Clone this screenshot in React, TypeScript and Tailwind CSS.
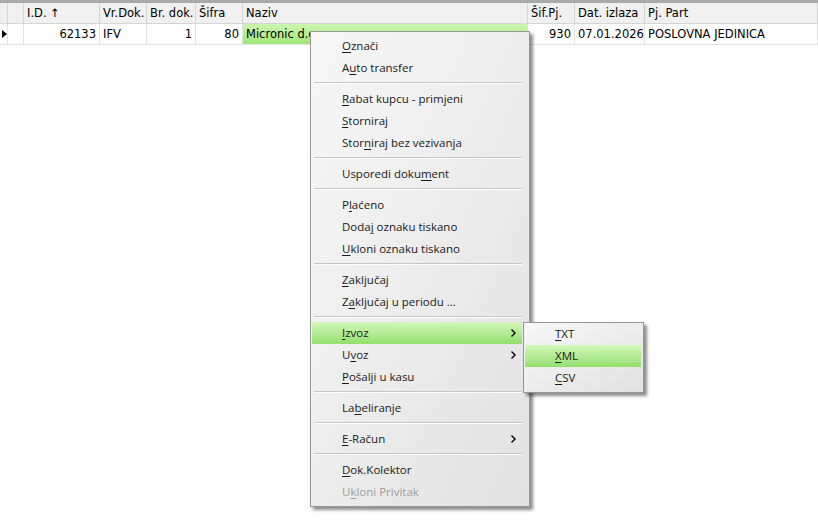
import React from "react";

type Item = { label: string; key?: number; sub?: boolean; disabled?: boolean; active?: boolean } | "sep";

const items: Item[] = [
  { label: "Označi", key: 0 },
  { label: "Auto transfer", key: 1 },
  "sep",
  { label: "Rabat kupcu - primjeni", key: 0 },
  { label: "Storniraj", key: 0 },
  { label: "Storniraj bez vezivanja", key: 4 },
  "sep",
  { label: "Usporedi dokument", key: 13 },
  "sep",
  { label: "Plaćeno", key: 1 },
  { label: "Dodaj oznaku tiskano", key: 4 },
  { label: "Ukloni oznaku tiskano", key: 0 },
  "sep",
  { label: "Zaključaj", key: 0 },
  { label: "Zaključaj u periodu ...", key: 1 },
  "sep",
  { label: "Izvoz", key: 0, sub: true, active: true },
  { label: "Uvoz", key: 1, sub: true },
  { label: "Pošalji u kasu", key: 0 },
  "sep",
  { label: "Labeliranje", key: 2 },
  "sep",
  { label: "E-Račun", key: 0, sub: true },
  "sep",
  { label: "Dok.Kolektor", key: 0 },
  { label: "Ukloni Privitak", key: 1, disabled: true },
];

const cols = [
  { w: "w-[8px]", h: "", v: "", right: false },
  { w: "w-[16px]", h: "", v: "", right: false },
  { w: "w-[76px]", h: "I.D. ↑", v: "62133", right: true },
  { w: "w-[47px]", h: "Vr.Dok.", v: "IFV", right: false },
  { w: "w-[49px]", h: "Br. dok.", v: "1", right: true },
  { w: "w-[47px]", h: "Šifra", v: "80", right: true },
  { w: "w-[285px]", h: "Naziv", v: "Micronic d.o.o.", right: false },
  { w: "w-[47px]", h: "Šif.Pj.", v: "930", right: true },
  { w: "w-[70px]", h: "Dat. izlaza", v: "07.01.2026", right: false },
  { w: "w-[173px]", h: "Pj. Part", v: "POSLOVNA JEDINICA", right: false },
];

function Label({ text, k }: { text: string; k?: number }) {
  if (k === undefined) return <>{text}</>;
  return (
    <>
      {text.slice(0, k)}
      <span className="underline underline-offset-2">{text[k]}</span>
      {text.slice(k + 1)}
    </>
  );
}

function Chevron() {
  return (
    <svg width="5" height="8" viewBox="0 0 5 8" className="absolute right-[6px] top-[7px]">
      <path d="M0.5 0.5 L4 4 L0.5 7.5" fill="none" stroke="#000" strokeWidth="1.4" />
    </svg>
  );
}

function MenuRow({ it }: { it: Exclude<Item, "sep"> }) {
  return (
    <div
      className={`relative h-[22px] pl-[30px] leading-[22px] whitespace-nowrap ${
        it.active ? "bg-linear-to-b from-[#d4f7bb] to-[#93df6c]" : ""
      } ${it.disabled ? "text-[#9e9e9e]" : "text-[#1a1a1a]"}`}
    >
      <Label text={it.label} k={it.key} />
      {it.sub && <Chevron />}
    </div>
  );
}

export default function App() {
  return (
    <div className="relative w-[818px] h-[528px] overflow-hidden bg-white font-['DejaVu_Sans',sans-serif] text-[11.5px] text-black">
      <div className="h-[3px] bg-[#a9a9a9]" />
      <div className="flex h-[21px] bg-[#f0f0f0] border-b border-[#d5d5d5]">
        {cols.map((c, i) => (
          <div key={i} className={`${c.w} shrink-0 border-r border-[#d5d5d5] px-[3px] leading-[20px] whitespace-nowrap overflow-hidden`}>
            {c.h}
          </div>
        ))}
      </div>
      <div className="flex h-[21px] border-b border-[#e2e2e2]">
        {cols.map((c, i) => (
          <div
            key={i}
            className={`${c.w} shrink-0 border-r border-[#e2e2e2] px-[3px] leading-[20px] whitespace-nowrap overflow-hidden ${
              c.right ? "text-right" : ""
            } ${i === 6 ? "bg-linear-to-b from-[#cdf6b0] to-[#9fe57a]" : ""}`}
          >
            {i === 0 ? (
              <svg width="5" height="8" viewBox="0 0 5 8" className="mt-[6px] -ml-[1px]">
                <path d="M0 0 L5 4 L0 8 Z" fill="#000" />
              </svg>
            ) : (
              c.v
            )}
          </div>
        ))}
      </div>

      <div className="absolute left-[310px] top-[31px] w-[220px] border border-[#979797] bg-linear-to-br from-[#f7f7f7] to-[#e2e2e2] py-[3px] pl-[1px] pr-[7px] font-['Open_Sans',sans-serif] text-[11.5px] shadow-[3px_3px_3px_rgba(0,0,0,0.45)]">
        {items.map((it, i) =>
          it === "sep" ? (
            <div key={i} className="h-[9px] pt-[3px] pl-[2px]">
              <div className="h-[1px] bg-[#c6c6c6]" />
              <div className="h-[1px] bg-white" />
            </div>
          ) : (
            <MenuRow key={i} it={it} />
          )
        )}
      </div>

      <div className="absolute left-[523px] top-[322px] w-[121px] border border-[#979797] bg-linear-to-br from-[#f7f7f7] to-[#e2e2e2] pl-[1px] pr-[2px] font-['Open_Sans',sans-serif] text-[11.5px] shadow-[3px_3px_3px_rgba(0,0,0,0.45)]">
        {[
          { label: "TXT", key: 0 },
          { label: "XML", key: 0, active: true },
          { label: "CSV", key: 0 },
        ].map((it, i) => (
          <MenuRow key={i} it={it} />
        ))}
        <div className="h-[3px]" />
      </div>
    </div>
  );
}
